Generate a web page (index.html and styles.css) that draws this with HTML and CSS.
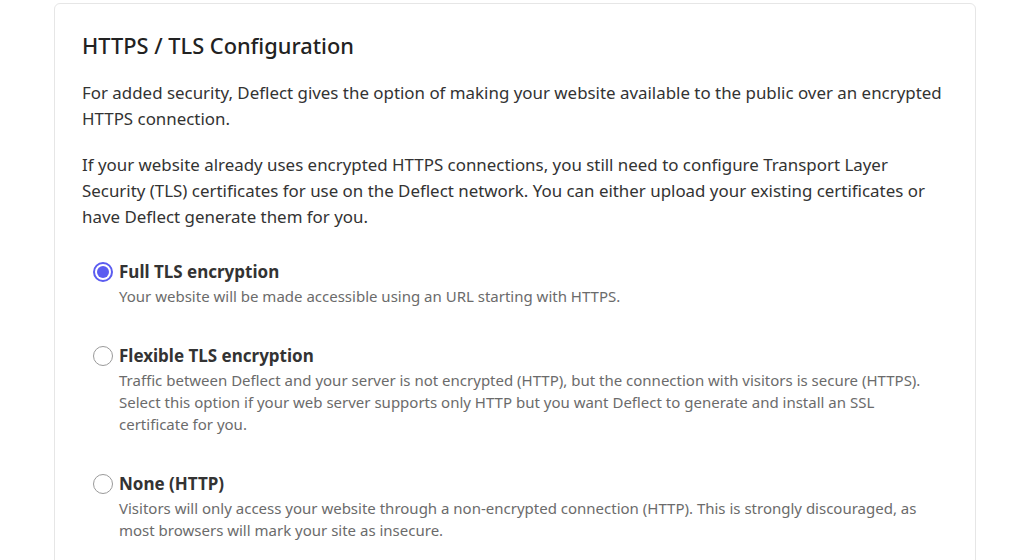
FILE: index.html
```html
<!DOCTYPE html>
<html lang="en">
<head>
<meta charset="utf-8">
<link rel="stylesheet" href="styles.css">
</head>
<body>
<div class="card">
  <h2 class="title">HTTPS / TLS Configuration</h2>
  <p class="text">For added security, Deflect gives the option of making your website available to the public over an encrypted HTTPS connection.</p>
  <p class="text">If your website already uses encrypted HTTPS connections, you still need to configure Transport Layer Security (TLS) certificates for use on the Deflect network. You can either upload your existing certificates or have Deflect generate them for you.</p>
  <div class="options">
    <label class="option">
      <span class="radio checked"></span>
      <span class="opt-body">
        <span class="opt-title">Full TLS encryption</span>
        <span class="opt-desc">Your website will be made accessible using an URL starting with HTTPS.</span>
      </span>
    </label>
    <label class="option">
      <span class="radio"></span>
      <span class="opt-body">
        <span class="opt-title">Flexible TLS encryption</span>
        <span class="opt-desc">Traffic between Deflect and your server is not encrypted (HTTP), but the connection with visitors is secure (HTTPS). Select this option if your web server supports only HTTP but you want Deflect to generate and install an SSL certificate for you.</span>
      </span>
    </label>
    <label class="option">
      <span class="radio"></span>
      <span class="opt-body">
        <span class="opt-title">None (HTTP)</span>
        <span class="opt-desc">Visitors will only access your website through a non-encrypted connection (HTTP). This is strongly discouraged, as most browsers will mark your site as insecure.</span>
      </span>
    </label>
  </div>
</div>
</body>
</html>
```
FILE: styles.css
```css
html, body {
  margin: 0;
  padding: 0;
  background: #ffffff;
}
body {
  font-family: "Noto Sans", "Open Sans", sans-serif;
  color: #333;
  padding: 3px 48px 0 54px;
  height: 560px;
  overflow: hidden;
}
.card {
  border: 1px solid #e6e6e6;
  border-radius: 6px;
  padding: 27px 28px 40px 27px;
  min-height: 700px;
  box-sizing: border-box;
}
.title {
  margin: 0 0 19px 0;
  font-size: 21.8px;
  font-weight: 500;
  color: #222;
  line-height: 30px;
}
.text {
  margin: 0 0 20px 0;
  font-size: 16.9px;
  line-height: 26px;
  color: #333;
}
.options {
  display: flex;
  flex-direction: column;
  gap: 37px;
  padding-left: 11px;
  margin-top: 30px;
}
.option {
  display: flex;
  gap: 6px;
  align-items: flex-start;
}
.radio {
  width: 20px;
  height: 20px;
  border: 1px solid #9a9a9a;
  border-radius: 50%;
  box-sizing: border-box;
  flex: none;
  margin-top: 2px;
  position: relative;
  background: #fff;
}
.radio.checked {
  border: 2px solid #5b5cf0;
}
.radio.checked::after {
  content: "";
  position: absolute;
  left: 2px;
  top: 2px;
  width: 12px;
  height: 12px;
  border-radius: 50%;
  background: #5b5cf0;
}
.opt-body {
  display: flex;
  flex-direction: column;
}
.opt-title {
  font-size: 17px;
  font-weight: 700;
  color: #333;
  line-height: 24px;
}
.opt-desc {
  margin-top: 1px;
  font-size: 15px;
  color: #6b6b6b;
  line-height: 22px;
}
```
